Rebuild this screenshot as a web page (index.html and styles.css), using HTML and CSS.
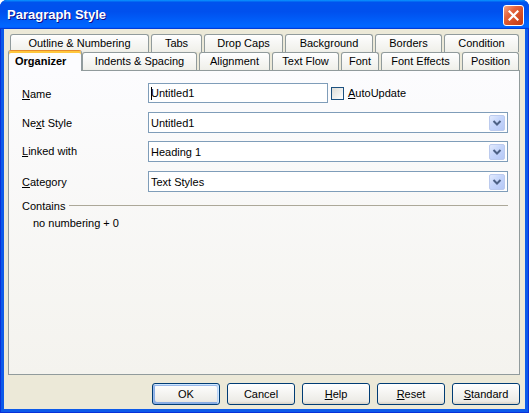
FILE: index.html
```html
<!DOCTYPE html>
<html>
<head>
<meta charset="utf-8">
<title>Paragraph Style</title>
<link rel="stylesheet" href="styles.css">
</head>
<body>
<div class="window">
  <div class="titlebar">
    <span class="title">Paragraph Style</span>
    <div class="close">
      <svg width="11" height="11" viewBox="0 0 11 11"><path d="M1.5 1.5 L9.5 9.5 M9.5 1.5 L1.5 9.5" stroke="#fff" stroke-width="2.2" stroke-linecap="square"/></svg>
    </div>
  </div>
  <div class="client">
    <div class="tabstrip">
      <div class="tabrow top">
        <div class="tab w-outline">Outline &amp; Numbering</div>
        <div class="tab w-tabs">Tabs</div>
        <div class="tab w-drop">Drop Caps</div>
        <div class="tab w-bg">Background</div>
        <div class="tab w-borders">Borders</div>
        <div class="tab w-cond">Condition</div>
      </div>
      <div class="tabrow bottom">
        <div class="tab sel w-org">Organizer</div>
        <div class="tab w-indent">Indents &amp; Spacing</div>
        <div class="tab w-align">Alignment</div>
        <div class="tab w-flow">Text Flow</div>
        <div class="tab w-font">Font</div>
        <div class="tab w-effects">Font Effects</div>
        <div class="tab w-pos">Position</div>
      </div>
    </div>
    <div class="panel">
      <div class="form">
        <div class="label"><u>N</u>ame</div>
        <div class="namecell">
          <div class="input"><span class="caret"></span>Untitled1</div>
          <div class="checkbox"></div>
          <div class="cblabel"><u>A</u>utoUpdate</div>
        </div>
        <div class="label">Ne<u>x</u>t Style</div>
        <div class="combo"><span>Untitled1</span><span class="ddbtn"><svg width="16" height="16" viewBox="0 0 16 16"><path d="M4.5 6 L8 9.5 L11.5 6" fill="none" stroke="#4d6185" stroke-width="2"/></svg></span></div>
        <div class="label r3"><u>L</u>inked with</div>
        <div class="combo r3"><span>Heading 1</span><span class="ddbtn"><svg width="16" height="16" viewBox="0 0 16 16"><path d="M4.5 6 L8 9.5 L11.5 6" fill="none" stroke="#4d6185" stroke-width="2"/></svg></span></div>
        <div class="label"><u>C</u>ategory</div>
        <div class="combo"><span>Text Styles</span><span class="ddbtn"><svg width="16" height="16" viewBox="0 0 16 16"><path d="M4.5 6 L8 9.5 L11.5 6" fill="none" stroke="#4d6185" stroke-width="2"/></svg></span></div>
      </div>
      <div class="group">
        <span>Contains</span>
        <div class="groupline"></div>
      </div>
      <div class="contains">no numbering + 0</div>
    </div>
    <div class="buttons">
      <div class="btn default">OK</div>
      <div class="btn">Cancel</div>
      <div class="btn"><u>H</u>elp</div>
      <div class="btn"><u>R</u>eset</div>
      <div class="btn"><u>S</u>tandard</div>
    </div>
  </div>
</div>
</body>
</html>
```
FILE: styles.css
```css
html, body {
  margin: 0;
  padding: 0;
  background: #ffffff;
}
body {
  font-family: "Liberation Sans", Arial, sans-serif;
  font-size: 11px;
  color: #000;
}
.window {
  width: 529px;
  height: 413px;
  display: flex;
  flex-direction: column;
  background: #0c5ae9;
  border-radius: 7px 7px 0 0;
  overflow: hidden;
  box-shadow: inset 0 0 0 1px #0831d9;
}
.titlebar {
  height: 29px;
  flex: none;
  display: flex;
  align-items: center;
  padding: 0 5px 0 7px;
  background: linear-gradient(180deg, #0997ff, #0053ee 8%, #0050ee 40%, #0066ff 88%, #0066ff 93%, #005bff 95%, #003dd7 96%, #003dd7);
}
.title {
  flex: 1;
  color: #fff;
  font-weight: bold;
  font-size: 13px;
  text-shadow: 1px 1px #0f1089;
  letter-spacing: 0;
}
.close {
  width: 21px;
  height: 21px;
  box-sizing: border-box;
  border: 1px solid #fff;
  border-radius: 3px;
  margin-top: 1px;
  background: linear-gradient(135deg, #f6a585 0%, #e4633c 35%, #d24a22 70%, #c43a14 100%);
  display: flex;
  align-items: center;
  justify-content: center;
}
.close svg { display: block; }
.client {
  flex: 1;
  margin: 0 4px 4px 4px;
  background: #ece9d8;
  padding: 5px 5px 0 4px;
  display: flex;
  flex-direction: column;
}
.tabstrip {
  display: flex;
  flex-direction: column;
}
.tabrow {
  display: flex;
  height: 18px;
  align-items: flex-start;
  gap: 2px;
}
.tabrow.top { padding-left: 2px; }
.tab {
  height: 18px;
  box-sizing: border-box;
  border: 1px solid #919b9c;
  border-bottom: none;
  border-radius: 3px 3px 0 0;
  background: linear-gradient(180deg, #ffffff, #fafaf9 26%, #f0f0ea 95%, #ecebe6);
  text-align: center;
  line-height: 17px;
  white-space: nowrap;
  overflow: hidden;
}
.tab.sel {
  height: 21px;
  margin-top: -2px;
  margin-right: -2px;
  line-height: 20px;
  background: #fcfcfe;
  border-top-color: #e68b2c;
  box-shadow: inset 0 2px #ffc73c;
  font-weight: bold;
  text-align: left;
  padding-left: 6px;
  position: relative;
  z-index: 2;
}
.w-outline { width: 139px; }
.w-tabs { width: 51px; }
.w-drop { width: 79px; }
.w-bg { width: 88px; }
.w-borders { width: 67px; }
.w-cond { width: 75px; }
.w-org { width: 74px; }
.w-indent { width: 115px; }
.w-align { width: 71px; }
.w-flow { width: 67px; }
.w-font { width: 38px; }
.w-effects { width: 79px; }
.w-pos { width: 57px; }

.panel {
  position: relative;
  z-index: 1;
  height: 305px;
  box-sizing: border-box;
  border: 1px solid #919b9c;
  background: linear-gradient(180deg, #fcfcfe, #f4f3ee);
  padding: 12px 11px 0 13px;
}
.form {
  display: grid;
  grid-template-columns: 126px auto;
  grid-template-rows: 21px 21px 22px 21px;
  row-gap: 8px;
  align-items: center;
}
.form .r3 { align-self: start; }
.label.r3 { line-height: 21px; }
.namecell {
  display: flex;
  align-items: center;
  align-self: start;
}
.input {
  width: 180px;
  height: 20px;
  box-sizing: border-box;
  border: 1px solid #7f9db9;
  background: #fff;
  padding-left: 2px;
  line-height: 18px;
  white-space: nowrap;
}
.caret {
  display: inline-block;
  width: 1px;
  height: 13px;
  background: #000;
  vertical-align: -3px;
  margin-right: -1px;
}
.checkbox {
  width: 13px;
  height: 13px;
  box-sizing: border-box;
  border: 1px solid #1c5180;
  background: linear-gradient(135deg, #dcdcd7, #ffffff);
  margin-left: 3px;
}
.cblabel { margin-left: 4px; }
.combo {
  width: 360px;
  height: 21px;
  box-sizing: border-box;
  border: 1px solid #7f9db9;
  background: #fff;
  padding: 0 2px 0 2px;
  display: flex;
  align-items: center;
  justify-content: space-between;
}
.ddbtn {
  width: 16px;
  height: 16px;
  box-sizing: border-box;
  border-radius: 2px;
  border: 1px solid #bccbee;
  background: linear-gradient(135deg, #e3ebfd 0%, #c6d6fb 45%, #b5c8f6 100%);
  display: flex;
}
.ddbtn svg { display: block; margin: -1px; }
.group {
  margin-top: 7px;
  height: 13px;
  display: flex;
  align-items: center;
}
.groupline {
  flex: 1;
  height: 1px;
  margin-left: 4px;
  background: #aca899;
}
.contains {
  margin-top: 5px;
  padding-left: 11px;
  line-height: 13px;
}
.buttons {
  margin-top: 8px;
  display: flex;
  justify-content: flex-end;
  gap: 7px;
}
.btn {
  width: 68px;
  height: 22px;
  box-sizing: border-box;
  border: 1px solid #003c74;
  border-radius: 3px;
  background: linear-gradient(180deg, #ffffff, #ecebe6 86%, #d6d0c5);
  text-align: center;
  line-height: 20px;
}
.btn.default {
  box-shadow: inset -1px 1px #cee7ff, inset 1px 2px #98b8ea, inset -2px 2px #bcd4f6, inset 1px -1px #89ade4, inset 2px -2px #89ade4;
}
```
